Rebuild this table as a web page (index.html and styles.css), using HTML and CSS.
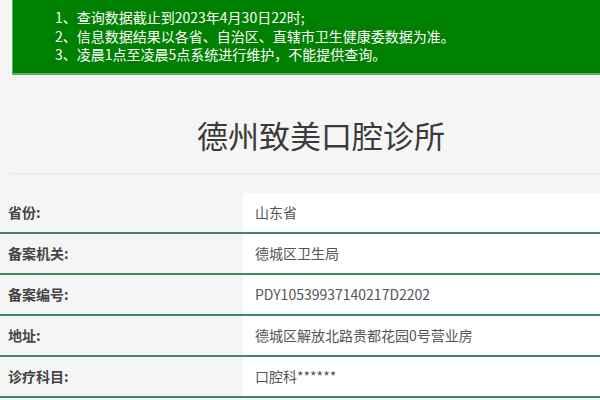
FILE: index.html
```html
<!DOCTYPE html>
<html lang="zh">
<head>
<meta charset="utf-8">
<link rel="stylesheet" href="styles.css">
</head>
<body>
<div class="notice">
  <p>1、查询数据截止到2023年4月30日22时;</p>
  <p>2、信息数据结果以各省、自治区、直辖市卫生健康委数据为准。</p>
  <p>3、凌晨1点至凌晨5点系统进行维护，不能提供查询。</p>
</div>
<h1 class="title">德州致美口腔诊所</h1>
<div class="rule"></div>
<table class="info">
  <tr><th>省份:</th><td>山东省</td></tr>
  <tr><th>备案机关:</th><td>德城区卫生局</td></tr>
  <tr><th>备案编号:</th><td>PDY10539937140217D2202</td></tr>
  <tr><th>地址:</th><td>德城区解放北路贵都花园0号营业房</td></tr>
  <tr><th>诊疗科目:</th><td>口腔科******</td></tr>
</table>
</body>
</html>
```
FILE: styles.css
```css
html, body {
  margin: 0;
  padding: 0;
  background: #f5f5f5;
  font-family: "Noto Sans CJK SC", "Noto Sans", sans-serif;
  overflow: hidden;
}
.notice {
  margin-left: 12px;
  background: #008000;
  color: #fff;
  padding: 8px 0 9px 42px;
  border-bottom: 2px solid #5fae5f;
  border-left: 1px solid #5fae5f;
  font-size: 14px;
  line-height: 18.5px;
}
.notice p {
  margin: 0;
}
.title {
  margin: 0;
  padding: 36px 0 0 42px;
  height: 62px;
  text-align: center;
  font-size: 31px;
  font-weight: normal;
  color: #3a3a3a;
  line-height: 48px;
}
.rule {
  margin-left: 10px;
  height: 1px;
  background: #e8e8e8;
}
.info {
  margin-top: 19px;
  width: 100%;
  border-collapse: collapse;
  font-size: 14px;
}
.info th {
  width: 243px;
  box-sizing: border-box;
  text-align: left;
  padding: 0 0 0 8px;
  font-weight: bold;
  color: #444;
  background: #f5f5f5;
  height: 40px;
  border-bottom: 2px solid #3f8a5f;
}
.info td {
  padding: 0 0 0 12px;
  background: #fff;
  color: #555;
  height: 39px;
  border-bottom: 2px solid #3f8a5f;
}
```
